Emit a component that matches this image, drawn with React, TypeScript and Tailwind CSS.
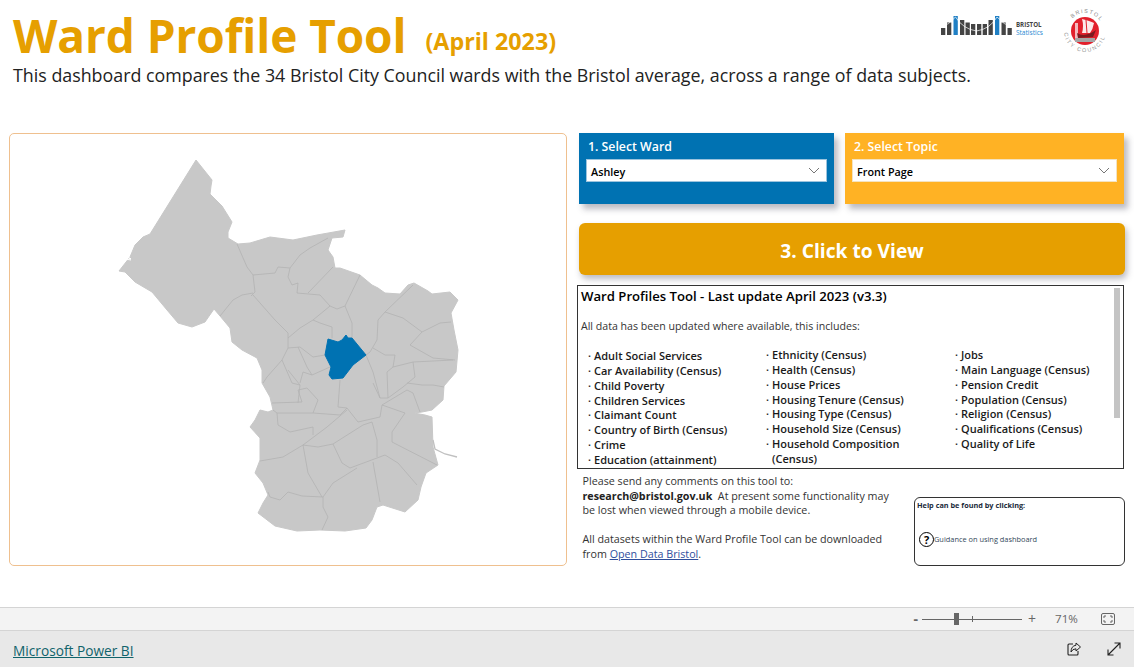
import React from "react";

const outline =
  "M196 160 L212 180 L211 186 L210 194 L222 206 L232 222 L228 232 L228 238 L238 244 L250 243 L270 237 L293 240 L317 235 L345 230 L343 237 L332 238 L328 250 L333 257 L335 268 L340 268 L360 275 L372 285 L378 288 L385 293 L400 294 L408 285 L414 283 L428 291 L432 294 L450 292 L458 300 L451 313 L454 330 L458 350 L456 372 L444 386 L443 400 L432 410 L422 412 L414 413 L425 415 L432 417 L433 447 L438 465 L426 473 L421 487 L418 500 L405 512 L383 505 L377 507 L372 520 L366 528 L345 531 L320 530 L297 531 L275 526 L258 513 L263 503 L268 495 L263 483 L255 473 L260 460 L260 438 L250 427 L255 420 L260 410 L268 412 L273 410 L270 397 L262 383 L262 370 L257 358 L242 350 L232 342 L230 328 L220 316 L214 309 L205 322 L192 327 L178 323 L167 310 L152 292 L135 282 L125 272 L119 271 L130 257 L135 245 L143 237 L150 234 Z";

const lines = [
  "M237 244 L247 267 L253 275 L255 292 L251 296",
  "M253 293 L242 295 L233 300 L220 316",
  "M253 295 L275 320 L288 333 L288 348",
  "M253 275 L275 273 L278 267 L290 268 L300 255 L310 248 L328 238",
  "M290 268 L288 277 L292 285 L298 283 L297 293 L320 295 L330 306 L337 309 L345 306 L360 275",
  "M308 293 L333 267",
  "M330 306 L313 320 L300 328 L288 338",
  "M345 306 L352 323 L352 338",
  "M313 320 L320 323 L332 327 L332 338",
  "M288 348 L300 347 L313 357 L325 355",
  "M288 348 L282 360 L267 377 L263 383",
  "M282 360 L292 383 L300 385 L298 403",
  "M298 347 L307 367 L312 375 L303 372 L300 383",
  "M312 375 L330 367",
  "M340 380 L338 407",
  "M366 355 L373 372 L380 398 L373 383",
  "M366 355 L370 352 L377 340 L378 320 L385 312 L413 285",
  "M385 312 L403 318 L422 332 L410 345 L433 358 L455 360",
  "M422 332 L440 323 L451 322",
  "M373 348 L385 355 L395 355 L393 367 L387 372 L388 398",
  "M393 367 L413 362 L453 360",
  "M413 362 L415 377 L403 387 L388 398 L380 398",
  "M407 383 L422 385 L433 385 L444 387",
  "M272 403 L302 402 L298 390 L307 388 L318 400 L313 413",
  "M288 370 L300 385",
  "M273 410 L277 413 L313 413 L340 415 L347 408",
  "M338 407 L347 408 L358 422 L380 417 L382 405",
  "M277 413 L278 425 L290 432 L313 427 L313 435",
  "M347 410 L327 427 L303 445 L283 457 L260 461",
  "M303 445 L318 447 L333 444 L363 425 L372 422",
  "M333 444 L342 463 L350 468 L377 458 L385 455",
  "M372 422 L377 440 L377 457",
  "M303 445 L308 473 L322 497",
  "M357 468 L333 483 L323 497 L302 496 L288 492 L280 500 L270 497 L268 492",
  "M323 497 L323 507 L328 517 L322 530",
  "M373 462 L380 502",
  "M385 455 L398 463 L417 485",
  "M382 405 L405 413 L392 432 L392 442 L437 465",
  "M382 405 L407 390 L413 393 L420 412",
];

const ashley =
  "M328 339 L338 342 L342 340 L346 335 L348 338 L352 338 L366 355 L353 365 L343 378 L332 379 L329 375 L331 367 L325 355 Z";

function WardMap() {
  return (
    <svg width="556" height="430" viewBox="10 134 556 430" className="block">
      <path d={outline} fill="#c8c8c8" stroke="#c8c8c8" strokeWidth="1" strokeLinejoin="round" />
      <path d="M433 440 L435 449 L445 454 L457 457" fill="none" stroke="#c0c0c0" strokeWidth="1.3" />
      <path d="M124 255 L131 259 L125 256 Z M125 259 L131 260" stroke="#ffffff" strokeWidth="1" fill="none" />
      {lines.map((d) => (
        <path key={d} d={d} fill="none" stroke="#b2b2b2" strokeWidth="0.8" strokeLinejoin="round" />
      ))}
      <path d={ashley} fill="#0072b2" stroke="#0072b2" strokeWidth="1" strokeLinejoin="round" />
    </svg>
  );
}

function StatsLogo() {
  const bars: [number, number, string][] = [
    [0, 12, "#444"], [6, 6.5, "#444"], [12.5, 0, "#1f7fc4"], [19, 4, "#444"], [24.5, 6.5, "#444"], [30, 8, "#444"], [36, 8, "#444"], [41.7, 8, "#444"], [47.5, 4, "#444"], [54, 0, "#1f7fc4"], [60.5, 6.5, "#444"], [66.5, 12, "#444"],
  ];
  return (
    <svg width="71" height="19" viewBox="0 0 71 19" className="block">
      {bars.map(([x, y, c]) => (
        <rect key={x} x={x} y={y} width="4.3" height={19 - y} fill={c} />
      ))}
      <path d="M0 11 Q8 9 14.5 1 Q22 13 35.5 15 Q49 13 56 1 Q63 9 71 11" fill="none" stroke="#ffffff" strokeWidth="0.7" />
    </svg>
  );
}

function CouncilLogo() {
  return (
    <svg width="44" height="44" viewBox="0 0 44 44" className="block">
      <defs>
        <path id="topArc" d="M4 22 A18 18 0 0 1 40 22" />
        <path id="botArc" d="M1 22 A21 21 0 0 0 43 22" />
      </defs>
      <text fontSize="5.5" fill="#8d8d8d" fontFamily="'Liberation Sans', sans-serif" letterSpacing="1.3">
        <textPath href="#topArc" startOffset="14">BRISTOL</textPath>
      </text>
      <text fontSize="5.4" fill="#8d8d8d" fontFamily="'Liberation Sans', sans-serif" letterSpacing="1.7">
        <textPath href="#botArc" startOffset="2">CITY COUNCIL</textPath>
      </text>
      <circle cx="22" cy="22" r="14" fill="#e2202c" />
      <path d="M12 14 h3 v15 h-3 Z" fill="#f4b9bd" />
      <path d="M19 10 Q27 12 31 14 Q30 20 27 24 L19 24 Q21 17 19 10 Z" fill="#ffffff" opacity="0.9" />
      <path d="M23 11 L24 24" stroke="#e2202c" strokeWidth="1" />
      <path d="M14 24 Q22 29 33 21 L30 28 L15 29 Z" fill="#7c1a20" />
      <path d="M12 29 h20 v4 h-20 Z" fill="#a5a5a5" />
    </svg>
  );
}

function Selector({ title, value, bg, border }: { title: string; value: string; bg: string; border: string }) {
  return (
    <div className={`${bg} flex h-[71px] flex-col px-[7px] pt-[5px] shadow-[4px_5px_6px_rgba(60,60,80,0.35)]`}>
      <div className="pl-[2px] text-[12.3px] leading-[17px] font-semibold text-white">{title}</div>
      <div className={`mt-[4px] flex h-[23px] items-center justify-between border ${border} bg-white pr-[6px] pl-[4px] text-[10.8px] font-semibold text-black`}>
        <span className="pt-[3px]">{value}</span>
        <svg width="12" height="7" viewBox="0 0 12 7">
          <path d="M1 1 L6 6 L11 1" fill="none" stroke="#666" strokeWidth="0.9" />
        </svg>
      </div>
    </div>
  );
}

const col1 = ["Adult Social Services", "Car Availability (Census)", "Child Poverty", "Children Services", "Claimant Count", "Country of Birth (Census)", "Crime", "Education (attainment)"];
const col2 = ["Ethnicity (Census)", "Health (Census)", "House Prices", "Housing Tenure (Census)", "Housing Type (Census)", "Household Size (Census)", "Household Composition"];
const col3 = ["Jobs", "Main Language (Census)", "Pension Credit", "Population (Census)", "Religion (Census)", "Qualifications (Census)", "Quality of Life"];

function Bullets({ items, extra }: { items: string[]; extra?: string }) {
  return (
    <ul className="text-[11px] leading-[14.85px] font-semibold text-[#1a1a1a]">
      {items.map((t) => (
        <li key={t} className="whitespace-nowrap">
          <span className="inline-block w-[6px]">·</span>
          {t}
        </li>
      ))}
      {extra && <li className="pl-[6px]">{extra}</li>}
    </ul>
  );
}

export default function App() {
  return (
    <div className="flex h-[667px] w-[1134px] flex-col overflow-hidden bg-white font-['Open_Sans','Noto_Sans',sans-serif]">
      <main className="flex h-[607px] flex-col pl-[9px]">
        <header className="flex h-[133px] shrink-0 flex-col pl-[4px]">
          <div className="flex items-start justify-between">
            <div className="flex items-start pt-[4px]">
              <h1 className="text-[46px] leading-[62px] font-bold tracking-[-0.1px] text-[#e69f00]">Ward Profile Tool</h1>
              <span className="mt-[21px] ml-[19px] text-[23.3px] leading-[32px] font-bold text-[#e69f00]">(April 2023)</span>
            </div>
            <div className="flex items-start pt-[9px] pr-[27px]">
              <div className="flex items-start pt-[7px]">
                <StatsLogo />
                <div className="mt-[5px] ml-[4px] text-[6.2px] leading-[8px]">
                  <div className="font-bold text-[#444]">BRISTOL</div>
                  <div className="text-[6.6px] text-[#1f8ad2]">Statistics</div>
                </div>
              </div>
              <div className="ml-[20px]">
                <CouncilLogo />
              </div>
            </div>
          </div>
          <p className="mt-[-3px] text-[17.83px] leading-[24px] whitespace-nowrap text-[#222]">
            This dashboard compares the 34 Bristol City Council wards with the Bristol average, across a range of data subjects.
          </p>
        </header>

        <div className="flex gap-[12px]">
          <section className="h-[433px] w-[558px] shrink-0 rounded-[5px] border border-[#efc08f] bg-white">
            <WardMap />
          </section>

          <section className="flex w-[546px] flex-col">
            <div className="flex gap-[11px]">
              <div className="w-[255px]">
                <Selector title="1. Select Ward" value="Ashley" bg="bg-[#0072b2]" border="border-[#9cc4de]" />
              </div>
              <div className="w-[279px]">
                <Selector title="2. Select Topic" value="Front Page" bg="bg-[#ffb224]" border="border-[#f4e3c0]" />
              </div>
            </div>

            <button className="mt-[19px] flex h-[52px] w-[546px] items-center justify-center rounded-[6px] bg-[#e69f00] pt-[5px] text-[19.2px] font-bold text-white shadow-[2px_4px_6px_rgba(60,60,80,0.35)]">
              3. Click to View
            </button>

            <div className="relative mt-[10px] ml-[-2px] h-[184px] w-[547px] overflow-hidden border border-[#333] pt-[2px] pl-[3px]">
              <div className="text-[13.15px] leading-[17px] font-semibold text-black">Ward Profiles Tool - Last update April 2023 (v3.3)</div>
              <p className="mt-[14px] text-[10.6px] leading-[15px] text-[#333]">All data has been updated where available, this includes:</p>
              <div className="mt-[14px] flex">
                <div className="ml-[7px] w-[178px] pt-[1px]">
                  <Bullets items={col1} />
                </div>
                <div className="w-[189px]">
                  <Bullets items={col2} extra="(Census)" />
                </div>
                <div>
                  <Bullets items={col3} />
                </div>
              </div>
              <div className="absolute top-[2px] right-[3px] h-[130px] w-[6px] bg-[#c4c4c4]" />
            </div>

            <div className="mt-[4px] flex items-start justify-between">
              <div className="w-[312px] pt-[1px] pl-[3.5px] text-[10.72px] leading-[14.5px] text-[#333]">
                <p>Please send any comments on this tool to:</p>
                <p>
                  <b className="font-bold text-[#222]">research@bristol.gov.uk</b>&nbsp; At present some functionality may be lost when viewed through a mobile device.
                </p>
                <p className="mt-[14.5px]">
                  All datasets within the Ward Profile Tool can be downloaded from <a className="text-[#2f4e9c] underline">Open Data Bristol</a>.
                </p>
              </div>
              <div className="mt-[24px] flex h-[69px] w-[211px] flex-col rounded-[6px] border border-[#333] px-[2px] pt-[1px]">
                <div className="text-[7.3px] leading-[12px] font-bold text-[#1a2a3a]">Help can be found by clicking:</div>
                <div className="mt-[21px] flex items-center pl-[2px]">
                  <span className="flex h-[15px] w-[15px] items-center justify-center rounded-full border-[1.5px] border-black text-[11px] leading-none font-bold text-black">?</span>
                  <span className="text-[7.4px] text-[#33485a]">Guidance on using dashboard</span>
                </div>
              </div>
            </div>
          </section>
        </div>
      </main>

      <div className="flex h-[24px] shrink-0 items-center justify-end border-y border-[#d4d4d4] bg-[#f3f3f3] pr-[19px] text-[#666]">
        <span className="text-[14px] leading-none font-bold">-</span>
        <div className="relative ml-[4px] h-[1px] w-[100px] bg-[#666]">
          <div className="absolute top-[-6px] left-[32px] h-[12px] w-[5px] bg-[#666]" />
          <div className="absolute top-[-3px] left-[50px] h-[6px] w-[1px] bg-[#666]" />
        </div>
        <span className="ml-[6px] text-[14px] leading-none">+</span>
        <span className="ml-[19px] w-[24px] text-[11.6px]">71%</span>
        <svg width="14" height="12" viewBox="0 0 14 12" className="ml-[22px]">
          <rect x="0.5" y="0.5" width="13" height="11" rx="1.5" fill="none" stroke="#666" />
          <path d="M3 5 V3 H5 M9 3 H11 V5 M3 7 V9 H5 M9 9 H11 V7" fill="none" stroke="#666" />
        </svg>
      </div>

      <footer className="flex flex-1 items-center justify-between bg-[#e8e8e8] pr-[13px] pl-[13px]">
        <a className="pt-[4px] text-[13.7px] text-[#10636b] underline">Microsoft Power BI</a>
        <div className="flex items-center gap-[26px]">
          <svg width="14" height="14" viewBox="0 0 14 14">
            <path d="M6 2 H2 Q1 2 1 3 V12 Q1 13 2 13 H10 Q11 13 11 12 V9" fill="none" stroke="#222" strokeWidth="1.1" />
            <path d="M9 1 L13.5 5 L9 9 V6.8 Q5.5 6.8 4 10 Q4 4 9 3.2 Z" fill="none" stroke="#222" strokeWidth="1" />
          </svg>
          <svg width="14" height="14" viewBox="0 0 14 14">
            <path d="M1 13 L13 1 M7.5 1 H13 V6.5 M1 7.5 V13 H6.5" fill="none" stroke="#222" strokeWidth="1.1" />
          </svg>
        </div>
      </footer>
    </div>
  );
}
